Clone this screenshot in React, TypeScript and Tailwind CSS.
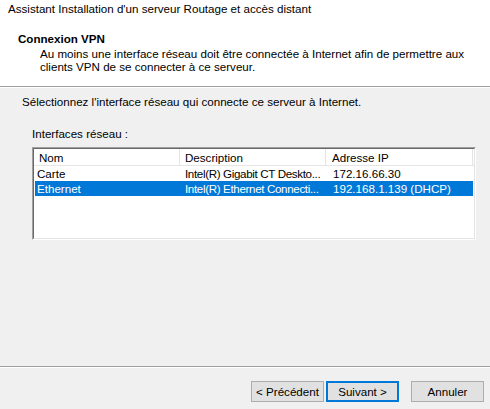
import React from 'react'

const font = { fontFamily: '"Liberation Sans", Arial, sans-serif' }

const rows = [
  { name: 'Carte', desc: 'Intel(R) Gigabit CT Deskto...', ip: '172.16.66.30', selected: false },
  { name: 'Ethernet', desc: 'Intel(R) Ethernet Connecti...', ip: '192.168.1.139 (DHCP)', selected: true },
]

function Button({ label, focused = false, className = '' }: { label: string; focused?: boolean; className?: string }) {
  return (
    <button
      className={
        focused
          ? `h-[21px] w-[73px] border-2 border-[#0078d7] bg-[#e1e1e1] text-[11.6px] leading-[15px] text-black ${className}`
          : `h-[21px] w-[73px] border border-[#adadad] bg-[#e1e1e1] text-[11.6px] leading-[15px] text-black ${className}`
      }
    >
      {label}
    </button>
  )
}

export default function App() {
  return (
    <div className="flex h-[409px] w-[490px] flex-col overflow-hidden bg-[#f0f0f0] text-[11.6px] text-black" style={font}>
      {/* wizard header */}
      <div className="h-[88px] shrink-0 border-b border-white">
        <div className="h-[87px] border-b border-[#a0a0a0] bg-white">
          <div className="pl-[8px] pt-[1px] leading-[16px]">Assistant Installation d'un serveur Routage et accès distant</div>
          <div className="mt-[14px] pl-[18px] font-bold leading-[16px]">Connexion VPN</div>
          <div className="pl-[40px] leading-[13px]">
            <div>Au moins une interface réseau doit être connectée à Internet afin de permettre aux</div>
            <div>clients VPN de se connecter à ce serveur.</div>
          </div>
        </div>
      </div>

      {/* page body */}
      <div className="flex-1">
        <div className="pl-[22px] pt-[6px] leading-[16px]">Sélectionnez l'interface réseau qui connecte ce serveur à Internet.</div>
        <div className="mt-[16px] pl-[32px] leading-[16px]">Interfaces réseau :</div>

        <div className="ml-[32px] mt-[5px] h-[93px] w-[444px] border border-b-white border-l-[#a0a0a0] border-r-white border-t-[#a0a0a0]">
          <div className="h-full border border-b-[#e3e3e3] border-l-[#696969] border-r-[#e3e3e3] border-t-[#696969] bg-white">
            {/* column header */}
            <div className="grid h-[17px] grid-cols-[146px_146px_147px] border-b border-[#e5e5e5] leading-[15px]">
              <div className="border-r border-[#e5e5e5] pl-[5px] pt-[1px]">Nom</div>
              <div className="border-r border-[#e5e5e5] pl-[5px] pt-[1px]">Description</div>
              <div className="border-r border-[#e5e5e5] pl-[6px] pt-[1px]">Adresse IP</div>
            </div>
            {rows.map((r) => (
              <div
                key={r.name}
                className={
                  r.selected
                    ? 'ml-[1px] mr-[1px] grid h-[15px] grid-cols-[145px_146px_147px] bg-[#0078d7] pt-[1px] leading-[14px] text-white'
                    : 'ml-[1px] mr-[1px] grid h-[15px] grid-cols-[145px_146px_147px] pt-[1px] leading-[14px]'
                }
              >
                <div className="overflow-hidden whitespace-nowrap pl-[2px]">{r.name}</div>
                <div className="overflow-hidden whitespace-nowrap pl-[5px] tracking-[-0.35px]">{r.desc}</div>
                <div className="overflow-hidden whitespace-nowrap pl-[7px]">{r.ip}</div>
              </div>
            ))}
          </div>
        </div>
      </div>

      {/* footer buttons */}
      <div className="h-[43px] shrink-0 border-t border-[#a0a0a0]">
        <div className="flex h-full items-start justify-end border-t border-white pr-[6px] pt-[13px]">
          <Button label="< Précédent" />
          <Button label="Suivant >" focused className="ml-[2px]" />
          <Button label="Annuler" className="ml-[12px]" />
        </div>
      </div>
    </div>
  )
}
